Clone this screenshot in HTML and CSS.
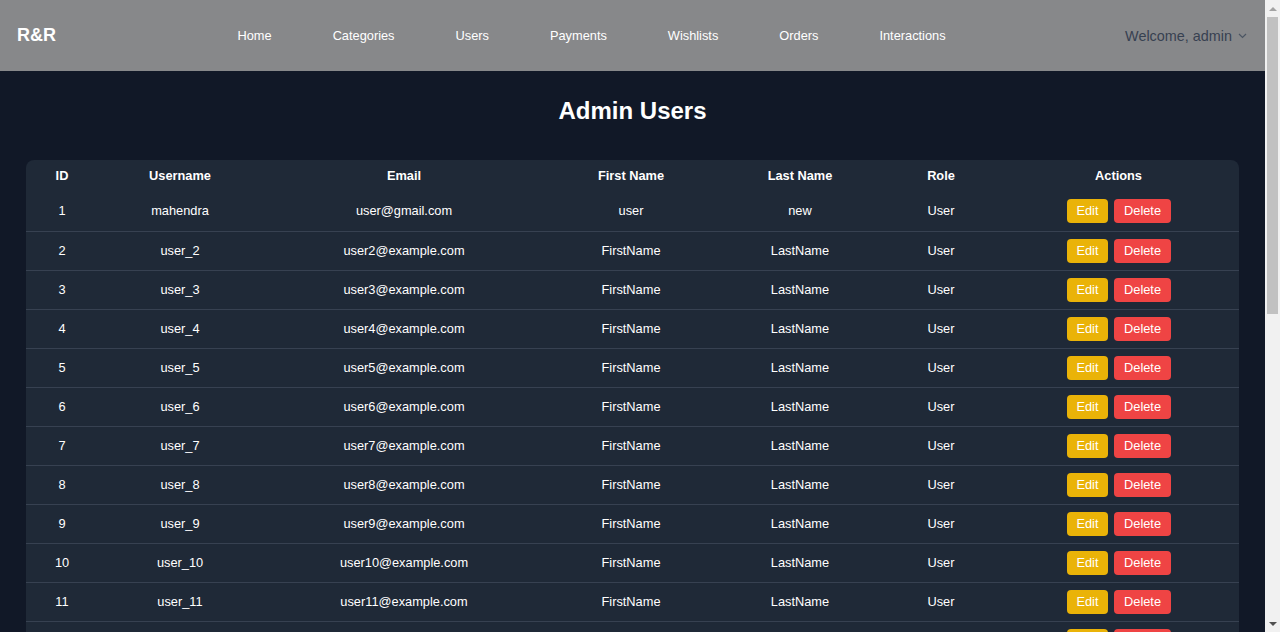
FILE: index.html
```html
<!DOCTYPE html>
<html lang="en">
<head>
<meta charset="utf-8">
<title>Admin Users</title>
<link rel="stylesheet" href="styles.css">
</head>
<body>
<div class="page">
<header class="topbar">
  <div class="logo">R&amp;R</div>
  <nav class="nav">
    <a href="#">Home</a>
    <a href="#">Categories</a>
    <a href="#">Users</a>
    <a href="#">Payments</a>
    <a href="#">Wishlists</a>
    <a href="#">Orders</a>
    <a href="#">Interactions</a>
  </nav>
  <div class="welcome">Welcome, admin
    <svg class="chev" width="9" height="6" viewBox="0 0 9 6"><path d="M1 1 L4.5 4.5 L8 1" fill="none" stroke="#4b5563" stroke-width="1.2"/></svg>
  </div>
</header>
<main class="main">
  <h1 class="title">Admin Users</h1>
  <div class="card">
    <table class="users">
      <colgroup>
        <col class="c-id"><col class="c-user"><col class="c-email"><col class="c-first"><col class="c-last"><col class="c-role"><col class="c-act">
      </colgroup>
      <thead>
        <tr><th>ID</th><th>Username</th><th>Email</th><th>First Name</th><th>Last Name</th><th>Role</th><th>Actions</th></tr>
      </thead>
      <tbody>
        <tr><td>1</td><td>mahendra</td><td>user@gmail.com</td><td>user</td><td>new</td><td>User</td><td><div class="acts"><button class="btn edit">Edit</button><button class="btn del">Delete</button></div></td></tr>
        <tr><td>2</td><td>user_2</td><td>user2@example.com</td><td>FirstName</td><td>LastName</td><td>User</td><td><div class="acts"><button class="btn edit">Edit</button><button class="btn del">Delete</button></div></td></tr>
        <tr><td>3</td><td>user_3</td><td>user3@example.com</td><td>FirstName</td><td>LastName</td><td>User</td><td><div class="acts"><button class="btn edit">Edit</button><button class="btn del">Delete</button></div></td></tr>
        <tr><td>4</td><td>user_4</td><td>user4@example.com</td><td>FirstName</td><td>LastName</td><td>User</td><td><div class="acts"><button class="btn edit">Edit</button><button class="btn del">Delete</button></div></td></tr>
        <tr><td>5</td><td>user_5</td><td>user5@example.com</td><td>FirstName</td><td>LastName</td><td>User</td><td><div class="acts"><button class="btn edit">Edit</button><button class="btn del">Delete</button></div></td></tr>
        <tr><td>6</td><td>user_6</td><td>user6@example.com</td><td>FirstName</td><td>LastName</td><td>User</td><td><div class="acts"><button class="btn edit">Edit</button><button class="btn del">Delete</button></div></td></tr>
        <tr><td>7</td><td>user_7</td><td>user7@example.com</td><td>FirstName</td><td>LastName</td><td>User</td><td><div class="acts"><button class="btn edit">Edit</button><button class="btn del">Delete</button></div></td></tr>
        <tr><td>8</td><td>user_8</td><td>user8@example.com</td><td>FirstName</td><td>LastName</td><td>User</td><td><div class="acts"><button class="btn edit">Edit</button><button class="btn del">Delete</button></div></td></tr>
        <tr><td>9</td><td>user_9</td><td>user9@example.com</td><td>FirstName</td><td>LastName</td><td>User</td><td><div class="acts"><button class="btn edit">Edit</button><button class="btn del">Delete</button></div></td></tr>
        <tr><td>10</td><td>user_10</td><td>user10@example.com</td><td>FirstName</td><td>LastName</td><td>User</td><td><div class="acts"><button class="btn edit">Edit</button><button class="btn del">Delete</button></div></td></tr>
        <tr><td>11</td><td>user_11</td><td>user11@example.com</td><td>FirstName</td><td>LastName</td><td>User</td><td><div class="acts"><button class="btn edit">Edit</button><button class="btn del">Delete</button></div></td></tr>
        <tr><td>12</td><td>user_12</td><td>user12@example.com</td><td>FirstName</td><td>LastName</td><td>User</td><td><div class="acts"><button class="btn edit">Edit</button><button class="btn del">Delete</button></div></td></tr>
        <tr><td>13</td><td>user_13</td><td>user13@example.com</td><td>FirstName</td><td>LastName</td><td>User</td><td><div class="acts"><button class="btn edit">Edit</button><button class="btn del">Delete</button></div></td></tr>
        <tr><td>14</td><td>user_14</td><td>user14@example.com</td><td>FirstName</td><td>LastName</td><td>User</td><td><div class="acts"><button class="btn edit">Edit</button><button class="btn del">Delete</button></div></td></tr>
        <tr><td>15</td><td>user_15</td><td>user15@example.com</td><td>FirstName</td><td>LastName</td><td>User</td><td><div class="acts"><button class="btn edit">Edit</button><button class="btn del">Delete</button></div></td></tr>
        <tr><td>16</td><td>user_16</td><td>user16@example.com</td><td>FirstName</td><td>LastName</td><td>User</td><td><div class="acts"><button class="btn edit">Edit</button><button class="btn del">Delete</button></div></td></tr>
        <tr><td>17</td><td>user_17</td><td>user17@example.com</td><td>FirstName</td><td>LastName</td><td>User</td><td><div class="acts"><button class="btn edit">Edit</button><button class="btn del">Delete</button></div></td></tr>
        <tr><td>18</td><td>user_18</td><td>user18@example.com</td><td>FirstName</td><td>LastName</td><td>User</td><td><div class="acts"><button class="btn edit">Edit</button><button class="btn del">Delete</button></div></td></tr>
        <tr><td>19</td><td>user_19</td><td>user19@example.com</td><td>FirstName</td><td>LastName</td><td>User</td><td><div class="acts"><button class="btn edit">Edit</button><button class="btn del">Delete</button></div></td></tr>
        <tr><td>20</td><td>user_20</td><td>user20@example.com</td><td>FirstName</td><td>LastName</td><td>User</td><td><div class="acts"><button class="btn edit">Edit</button><button class="btn del">Delete</button></div></td></tr>
        <tr><td>21</td><td>user_21</td><td>user21@example.com</td><td>FirstName</td><td>LastName</td><td>User</td><td><div class="acts"><button class="btn edit">Edit</button><button class="btn del">Delete</button></div></td></tr>
        <tr><td>22</td><td>user_22</td><td>user22@example.com</td><td>FirstName</td><td>LastName</td><td>User</td><td><div class="acts"><button class="btn edit">Edit</button><button class="btn del">Delete</button></div></td></tr>
        <tr><td>23</td><td>user_23</td><td>user23@example.com</td><td>FirstName</td><td>LastName</td><td>User</td><td><div class="acts"><button class="btn edit">Edit</button><button class="btn del">Delete</button></div></td></tr>
        <tr><td>24</td><td>user_24</td><td>user24@example.com</td><td>FirstName</td><td>LastName</td><td>User</td><td><div class="acts"><button class="btn edit">Edit</button><button class="btn del">Delete</button></div></td></tr>
        <tr><td>25</td><td>user_25</td><td>user25@example.com</td><td>FirstName</td><td>LastName</td><td>User</td><td><div class="acts"><button class="btn edit">Edit</button><button class="btn del">Delete</button></div></td></tr>
        <tr><td>26</td><td>user_26</td><td>user26@example.com</td><td>FirstName</td><td>LastName</td><td>User</td><td><div class="acts"><button class="btn edit">Edit</button><button class="btn del">Delete</button></div></td></tr>
        <tr><td>27</td><td>user_27</td><td>user27@example.com</td><td>FirstName</td><td>LastName</td><td>User</td><td><div class="acts"><button class="btn edit">Edit</button><button class="btn del">Delete</button></div></td></tr>
      </tbody>
    </table>
  </div>
</main>
</div>
<div class="scrollbar" aria-hidden="true">
  <div class="sb-btn"><span class="tri up"></span></div>
  <div class="sb-track"><div class="sb-thumb"></div></div>
  <div class="sb-btn"><span class="tri down"></span></div>
</div>
</body>
</html>
```

FILE: styles.css
```css
* { box-sizing: border-box; }
html { overflow: hidden; }
html, body { margin: 0; padding: 0; }
body {
  background: #111827;
  color: #ffffff;
  font-family: "Liberation Sans", Arial, Helvetica, sans-serif;
}
.page {
  width: 1265px;
}
.topbar {
  height: 71px;
  background: #87888a;
  display: flex;
  align-items: center;
  justify-content: space-between;
  padding: 0 18px 0 17px;
}
.logo {
  font-size: 18px;
  font-weight: bold;
  color: #ffffff;
}
.nav {
  display: flex;
  gap: 61px;
  margin-left: 2px;
  margin-top: -1px;
}
.nav a {
  color: #ffffff;
  text-decoration: none;
  font-size: 12.8px;
}
.welcome {
  display: flex;
  align-items: center;
  gap: 6px;
  font-size: 14.4px;
  color: #374151;
}
.chev { margin-top: 1px; }
.main {
  padding: 24px 26px 26px;
}
.title {
  margin: 0 0 33px;
  text-align: center;
  font-size: 24px;
  line-height: 32px;
  font-weight: bold;
}
.card {
  background: #1f2937;
  border-radius: 8px;
  overflow: hidden;
}
.users {
  width: 100%;
  border-collapse: collapse;
  table-layout: fixed;
  font-size: 12.8px;
}
.c-id { width: 72px; }
.c-user { width: 164px; }
.c-email { width: 284px; }
.c-first { width: 170px; }
.c-last { width: 168px; }
.c-role { width: 114px; }
.c-act { width: 241px; }
.users th {
  height: 31px;
  padding: 0;
  font-weight: bold;
  text-align: center;
  vertical-align: middle;
}
.users td {
  height: 39px;
  padding: 0;
  text-align: center;
  vertical-align: middle;
  border-bottom: 1px solid #374151;
}
.users tbody tr:first-child td { height: 40px; }
.users tbody tr:last-child td { border-bottom: none; }
.acts {
  display: flex;
  justify-content: center;
  gap: 6px;
  padding-left: 1px;
}
.btn {
  height: 24px;
  border: none;
  border-radius: 4px;
  padding: 0 9.5px;
  font-family: "Liberation Sans", Arial, Helvetica, sans-serif;
  font-size: 12.8px;
  line-height: 24px;
  color: #ffffff;
  cursor: pointer;
}
.edit { background: #eab308; }
.del { background: #ef4444; padding: 0 10px; }

/* classic browser scrollbar drawn over the right edge */
.scrollbar {
  position: fixed;
  top: 0;
  right: 0;
  bottom: 0;
  width: 15px;
  background: #f1f1f1;
  display: flex;
  flex-direction: column;
}
.sb-btn {
  height: 17px;
  display: flex;
  align-items: center;
  justify-content: center;
}
.sb-track {
  flex: 1;
  padding: 0 2px;
}
.sb-thumb {
  height: 297px;
  background: #c1c1c1;
}
.tri {
  width: 0;
  height: 0;
  border-left: 4px solid transparent;
  border-right: 4px solid transparent;
}
.tri.up { border-bottom: 4px solid #a3a3a3; }
.tri.down { border-top: 4px solid #505050; }
```
